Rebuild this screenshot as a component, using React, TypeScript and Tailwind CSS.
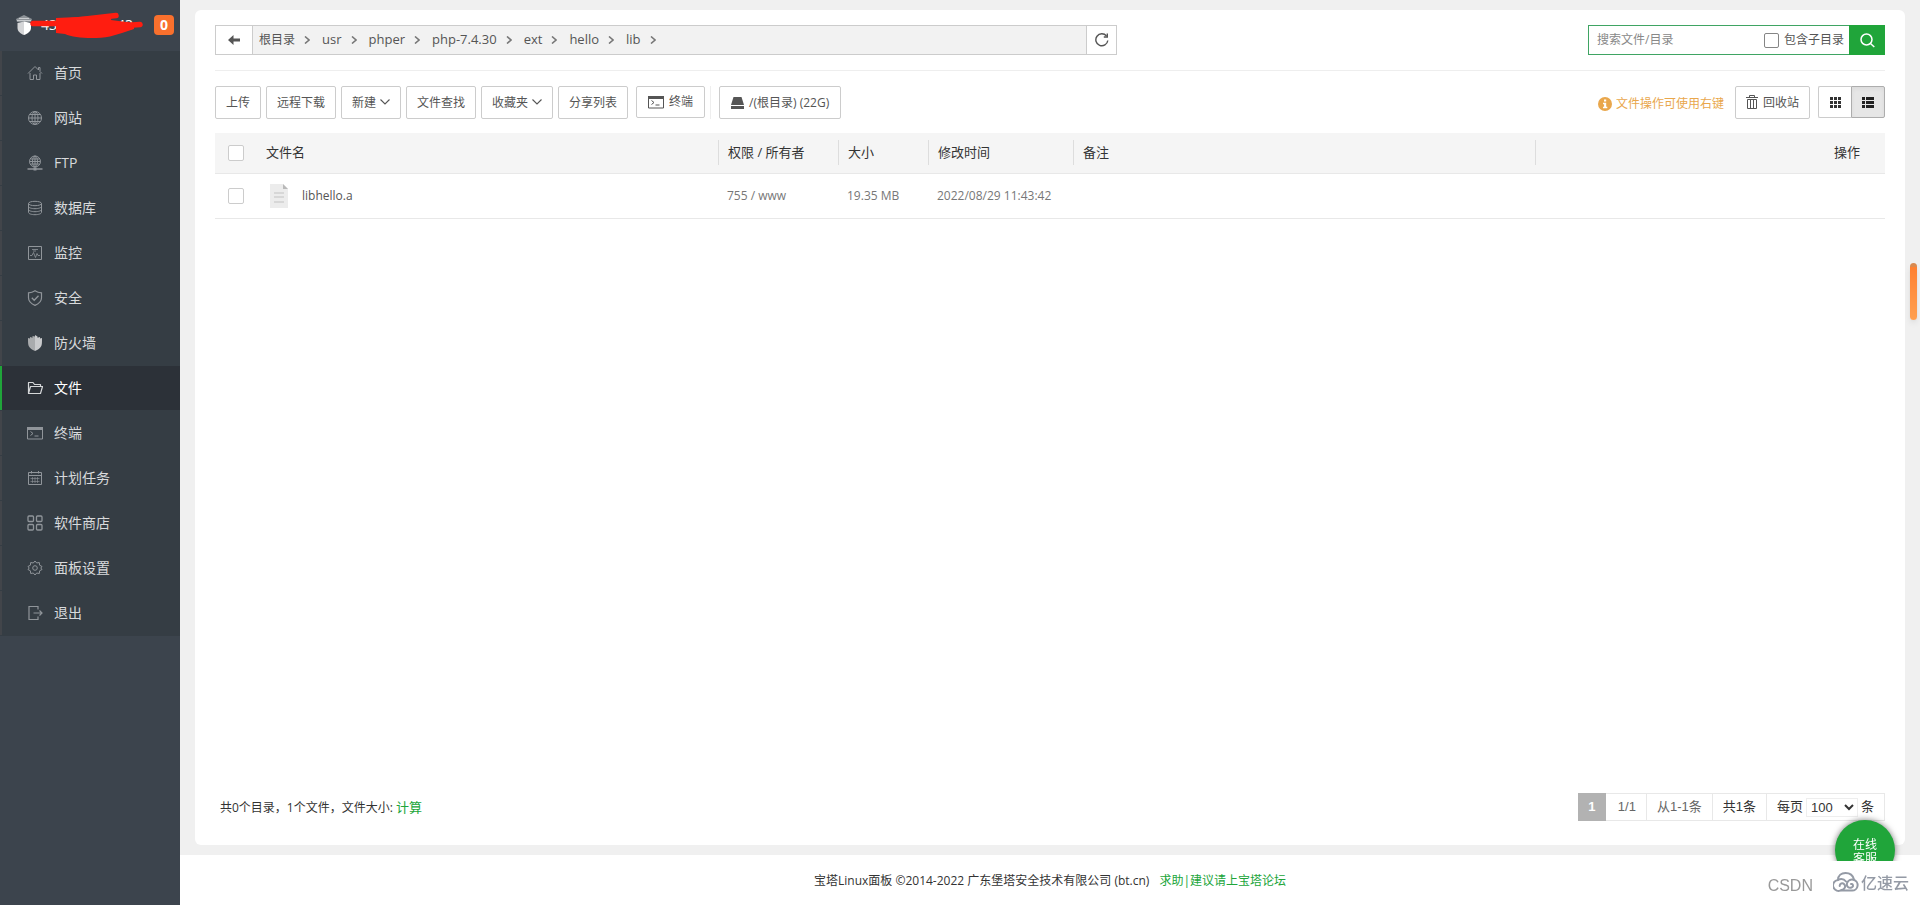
import type { ReactNode } from "react";
import clsx from "clsx";

interface MenuItem {
  label: string;
  icon: ReactNode;
  active?: boolean;
}

interface SvgIconProps {
  children: ReactNode;
  className?: string;
}

function LineIcon({ children, className = "size-4" }: SvgIconProps) {
  return (
    <svg viewBox="0 0 16 16" fill="none" stroke="currentColor" strokeWidth="1" className={className} aria-hidden="true">
      {children}
    </svg>
  );
}

function TerminalIcon({ className = "size-4" }: { className?: string }) {
  return (
    <LineIcon className={className}>
      <path d="M.5 2.500h15v11.500H.5z" />
      <path d="M0 2h16v3H0z" fill="currentColor" stroke="none" />
      <path d="M3.500 6.500l2.500 2-2.500 2M7.500 11h4" />
    </LineIcon>
  );
}

const menu: MenuItem[] = [
  {
    label: "首页",
    icon: (
      <LineIcon>
        <path d="M1 8.500 8 1.500l3.500 3.500V2.500h1.500V6.500l2 2M3 8v6.500h3.500V10h3v4.500H13V8" />
      </LineIcon>
    ),
  },
  {
    label: "网站",
    icon: (
      <LineIcon>
        <circle cx="8" cy="8" r="6.500" />
        <ellipse cx="8" cy="8" rx="3" ry="6.500" />
        <path d="M8 1.500v13M1.500 8h13M2.500 4.500h11M2.500 11.500h11" />
      </LineIcon>
    ),
  },
  {
    label: "FTP",
    icon: (
      <LineIcon>
        <circle cx="8" cy="6.500" r="5.500" />
        <ellipse cx="8" cy="6.500" rx="2.500" ry="5.500" />
        <path d="M8 1v11M2.500 6.500h11M3.500 4h9M3.500 9h9" />
        <path d="M.5 14h15" strokeWidth="1.500" />
        <path d="M6.500 14h3" strokeWidth="3" />
      </LineIcon>
    ),
  },
  {
    label: "数据库",
    icon: (
      <LineIcon>
        <ellipse cx="8" cy="3.500" rx="6.500" ry="2.200" />
        <path d="M1.500 3.500v9c0 1.200 3 2.200 6.500 2.200s6.500-1 6.500-2.200v-9M1.500 6.500c0 1.200 3 2.200 6.500 2.200s6.500-1 6.500-2.200M1.500 9.500c0 1.200 3 2.200 6.500 2.200s6.500-1 6.500-2.200" />
      </LineIcon>
    ),
  },
  {
    label: "监控",
    icon: (
      <LineIcon>
        <path d="M1.500 1.500h13v13h-13z" />
        <path d="M3 10.500h2l1.500-3 2 5 1.500-4 1 2h2M5 4.500h6M6 6h3" strokeWidth=".8" />
      </LineIcon>
    ),
  },
  {
    label: "安全",
    icon: (
      <LineIcon>
        <path d="M8 .8c2 1.400 4 2 6.500 2v5c0 3.500-2.500 6-6.500 7.600C4 13.800 1.500 11.300 1.500 7.800v-5c2.500 0 4.500-.6 6.500-2z" strokeWidth="1.200" />
        <path d="M4.800 7.800l2.400 2.400 4.300-4.500" strokeWidth="1.300" />
      </LineIcon>
    ),
  },
  {
    label: "防火墙",
    icon: (
      <svg viewBox="0 0 16 16" className="size-4" aria-hidden="true">
        <path d="M8 0v16c-3-1.300-5-2.800-6-4.500-1-1.500-1-4-1-8.500l2 .5V2l2.500.8V1L8 1.500z" fill="#a9abad" />
        <path d="M8 0l2.500 1.500v1.300L13 2v1.500l2-.5c0 4.500 0 7-1 8.500-1 1.700-3 3.200-6 4.500z" fill="#c9cacc" />
      </svg>
    ),
  },
  {
    label: "文件",
    active: true,
    icon: (
      <LineIcon>
        <path d="M1.500 13.500v-11h4.500l1.500 2h6v2M1.500 13.500l2-7h12l-2 7z" strokeWidth="1.200" strokeLinejoin="round" />
      </LineIcon>
    ),
  },
  { label: "终端", icon: <TerminalIcon /> },
  {
    label: "计划任务",
    icon: (
      <LineIcon>
        <path d="M1.500 2.500h13v12h-13zM1.500 5.500h13M4.500 1v2.500M11.500 1v2.500" />
        <path d="M3.500 8.500h9M3.500 11.500h9M5.500 7v6M8 7v6M10.500 7v6" strokeWidth=".6" />
      </LineIcon>
    ),
  },
  {
    label: "软件商店",
    icon: (
      <LineIcon>
        <rect x="1" y="1" width="5.500" height="5.500" rx="1" strokeWidth="1.300" />
        <rect x="9.500" y="1" width="5.500" height="5.500" rx="1" strokeWidth="1.300" />
        <rect x="1" y="9.500" width="5.500" height="5.500" rx="1" strokeWidth="1.300" />
        <rect x="9.500" y="9.500" width="5.500" height="5.500" rx="1" strokeWidth="1.300" />
      </LineIcon>
    ),
  },
  {
    label: "面板设置",
    icon: (
      <LineIcon>
        <path d="M8 1l1.700 2 2.600-.5.3 2.700 2.400 1.300L13.800 8l1.200 1.500-2.400 1.300-.3 2.700-2.600-.5L8 15l-1.700-2-2.600.5-.3-2.700L1 9.500 2.200 8 1 6.500l2.400-1.300.3-2.700 2.600.5z" />
        <circle cx="8" cy="8" r="2.300" />
      </LineIcon>
    ),
  },
  {
    label: "退出",
    icon: (
      <LineIcon>
        <path d="M11 4.500v-3H2v13h9v-3M6.500 8h8M12.500 5.500 15 8l-2.500 2.500" strokeWidth="1.200" />
      </LineIcon>
    ),
  },
];

const crumbs = ["根目录", "usr", "phper", "php-7.4.30", "ext", "hello", "lib"];

function Sidebar() {
  return (
    <aside className="w-[180px] shrink-0 bg-[#3c444d]">
      <div className="relative flex h-[51px] items-center pr-[6px] pl-[15px] pb-[1px]">
        <svg viewBox="0 0 18 20" className="h-5 w-[18px]" aria-hidden="true">
          <path d="M1 4l8-4 8 4-1 3H2z" fill="#8d9297" />
          <path d="M4 3.500h10M2 5.500h14" stroke="#c9cccf" strokeWidth="1" />
          <path d="M2.500 8 9 6.500V20c-4-1.500-6.500-4-6.500-7z" fill="#d5d6d8" />
          <path d="M9 6.500 16 8v5c0 3-3 5.500-7 7z" fill="#fff" />
        </svg>
        <span className="ml-2 text-sm text-white">43</span>
        <span className="ml-[60px] text-sm text-white">43</span>
        <svg viewBox="0 0 120 28" className="absolute top-3 left-[28px] h-7 w-[120px]" aria-hidden="true">
          <path d="M5 11.500h40M40 9 88 3.500M60 16l52-3.500" fill="none" stroke="#ff1d10" strokeWidth="5.500" strokeLinecap="round" />
          <path d="M28 6 60 4.500 84 3l-1 5 23 3v6c-8 3-16 5-24 7.500C66 27.500 46 26 37 22l-9-1z" fill="#ff1d10" />
        </svg>
        <span className="ml-auto flex size-5 items-center justify-center rounded bg-[#f9702d] text-sm font-bold text-white">0</span>
      </div>
      <nav className="flex flex-col bg-[#353d44]">
        {menu.map((item) => (
          <a
            key={item.label}
            href="#"
            className={clsx(
              "mb-px flex h-11 items-center gap-[11px] border-l-2 pl-[25px] text-sm",
              item.active ? "border-[#20a53a] bg-[#2c3138] text-white" : "border-[#42454a] text-[#d8dadc]"
            )}
          >
            <span className={item.active ? "text-[#d5d7d9]" : "text-[#90959a]"}>{item.icon}</span>
            {item.label}
          </a>
        ))}
      </nav>
    </aside>
  );
}

function PathBar() {
  return (
    <div className="flex h-[30px] w-[902px] border border-[#ccc] text-[#555]">
      <button type="button" aria-label="返回" className="flex w-[37px] items-center justify-center border-r border-[#ccc] bg-white">
        <svg viewBox="0 0 12 10" className="h-[10px] w-3" aria-hidden="true">
          <path d="M0 5l5.500-5v3.400H12v3.200H5.500V10z" fill="currentColor" />
        </svg>
      </button>
      <div className="flex flex-1 items-center bg-[#f2f2f2] pl-[6px]">
        {crumbs.map((name, i) => (
          <span key={name} className="flex items-center">
            <a href="#" className={i === 0 ? "text-xs" : "text-[13px]"}>
              {name}
            </a>
            <svg viewBox="0 0 6 8" className="mr-3 ml-[9px] h-2 w-[6px]" fill="none" stroke="#777" strokeWidth="1.600" aria-hidden="true">
              <path d="M1 .5 5 4 1 7.500" />
            </svg>
          </span>
        ))}
      </div>
      <button type="button" aria-label="刷新" className="flex w-[30px] items-center justify-center border-l border-[#ccc] bg-white">
        <svg viewBox="0 0 14 14" className="size-[14px]" fill="none" stroke="currentColor" strokeWidth="1.400" aria-hidden="true">
          <path d="M12.800 7.500A6 6 0 1 1 11.500 3" />
          <path d="M12.300.5v3.500H8.800" />
        </svg>
      </button>
    </div>
  );
}

function SearchBox() {
  return (
    <form className="flex h-[30px] w-[297px]">
      <div className="flex min-w-0 flex-1 items-center border border-r-0 border-[#3fa463] pr-[5px] pl-2 text-xs text-[#555]">
        <input type="text" aria-label="搜索" placeholder="搜索文件/目录" className="min-w-0 flex-1 outline-none placeholder:text-[#888]" />
        <label className="flex items-center gap-[5px]">
          <input type="checkbox" className="size-[15px] appearance-none rounded-xs border border-[#858585] bg-white" />
          包含子目录
        </label>
      </div>
      <button type="submit" aria-label="搜索" className="flex w-9 items-center justify-center bg-[#20a53a] text-white">
        <svg viewBox="0 0 15 15" className="size-[15px]" fill="none" stroke="currentColor" strokeWidth="1.500" aria-hidden="true">
          <circle cx="6.500" cy="6.500" r="5.500" />
          <path d="M10.500 10.500 14.300 14" />
        </svg>
      </button>
    </form>
  );
}

interface ToolButtonProps {
  children: ReactNode;
  dropdown?: boolean;
  className?: string;
}

function ToolButton({ children, dropdown, className = "h-[33px] px-[10px]" }: ToolButtonProps) {
  return (
    <button
      type="button"
      className={clsx("flex items-center rounded-xs border border-[#ccc] bg-white text-xs whitespace-nowrap text-[#555]", className)}
    >
      {children}
      {dropdown && (
        <svg viewBox="0 0 10 6" className="mb-[2px] ml-1 h-[6px] w-[10px]" fill="none" stroke="currentColor" strokeWidth="1.100" aria-hidden="true">
          <path d="M.5.5 5 5 9.500.5" />
        </svg>
      )}
    </button>
  );
}

function Toolbar() {
  return (
    <div className="flex items-start gap-[5px]">
      <ToolButton>上传</ToolButton>
      <ToolButton>远程下载</ToolButton>
      <ToolButton dropdown>新建</ToolButton>
      <ToolButton>文件查找</ToolButton>
      <ToolButton dropdown>收藏夹</ToolButton>
      <ToolButton>分享列表</ToolButton>
      <ToolButton className="ml-[3px] h-8 gap-[5px] px-[11px]">
        <TerminalIcon />
        终端
      </ToolButton>
      <span className="h-[33px] w-px bg-[#eee]" />
      <ToolButton className="ml-[3px] h-[33px] gap-[5px] px-[11px]">
        <svg viewBox="0 0 13 12" className="h-3 w-[13px]" fill="currentColor" aria-hidden="true">
          <path d="M2.500 0h8L13 8H0zM0 9h13v3H0z" />
        </svg>
        /(根目录) (22G)
      </ToolButton>

      <div className="ml-auto flex items-start">
        <span className="flex h-9 items-center gap-1 text-xs text-[#e9a74c]">
          <svg viewBox="0 0 14 14" className="size-[14px]" aria-hidden="true">
            <circle cx="7" cy="7" r="7" fill="currentColor" />
            <path d="M6 2.500h2.200v2H6zM5 5.800h3.200v4H9.300v1.500H5V9.800h1.100V7.300H5z" fill="#fff" />
          </svg>
          文件操作可使用右键
        </span>
        <ToolButton className="mr-2 ml-[11px] h-[33px] gap-[5px] px-[10px]">
          <svg viewBox="0 0 12 14" className="mb-[2px] h-[14px] w-3" fill="none" stroke="currentColor" aria-hidden="true">
            <path d="M0 2.500h12M3.500 2.500v-2h5v2M1.500 4.500v9h9v-9zM4.500 5v8M7.500 5v8" />
          </svg>
          回收站
        </ToolButton>
        <button
          type="button"
          aria-label="图标视图"
          className="flex h-8 w-[33px] items-center justify-center rounded-l-xs border border-r-0 border-[#ccc] text-[#333]"
        >
          <svg viewBox="0 0 11 11" className="size-[11px]" fill="currentColor" aria-hidden="true">
            <path d="M0 0h3v3H0zM4 0h3v3H4zM8 0h3v3H8zM0 4h3v3H0zM4 4h3v3H4zM8 4h3v3H8zM0 8h3v3H0zM4 8h3v3H4zM8 8h3v3H8z" />
          </svg>
        </button>
        <button
          type="button"
          aria-label="列表视图"
          className="flex h-8 w-[34px] items-center justify-center rounded-r-xs border border-[#adadad] bg-[#e6e6e6] text-[#222] inset-shadow-sm"
        >
          <svg viewBox="0 0 12 11" className="h-[11px] w-3" fill="currentColor" aria-hidden="true">
            <path d="M0 0h3v3H0zM4 0h8v3H4zM0 4h3v3H0zM4 4h8v3H4zM0 8h3v3H0zM4 8h8v3H4z" />
          </svg>
        </button>
      </div>
    </div>
  );
}

function RowCheckbox({ label }: { label: string }) {
  return (
    <input
      type="checkbox"
      aria-label={label}
      className="ml-[13px] block size-4 appearance-none rounded-xs border border-[#ccc] bg-white"
    />
  );
}

function HeadCell({ children }: { children?: ReactNode }) {
  return (
    <th className="p-0 font-normal">
      <div className="h-[25px] border-l border-[#ddd] pl-[9px] leading-[25px]">{children}</div>
    </th>
  );
}

function FileTable() {
  return (
    <table className="w-full table-fixed border-collapse text-left">
      <colgroup>
        <col className="w-[51px]" />
        <col className="w-[452px]" />
        <col className="w-[120px]" />
        <col className="w-[90px]" />
        <col className="w-[145px]" />
        <col />
        <col className="w-[350px]" />
      </colgroup>
      <thead>
        <tr className="h-[40px] border-b border-[#e8e8e8] bg-[#f5f5f5] text-[13px] text-[#333]">
          <th className="p-0">
            <RowCheckbox label="全选" />
          </th>
          <th className="p-0 font-normal">文件名</th>
          <HeadCell>权限 / 所有者</HeadCell>
          <HeadCell>大小</HeadCell>
          <HeadCell>修改时间</HeadCell>
          <HeadCell>备注</HeadCell>
          <th className="p-0 text-right font-normal">
            <div className="h-[25px] border-l border-[#ddd] pr-[25px] leading-[25px]">操作</div>
          </th>
        </tr>
      </thead>
      <tbody>
        <tr className="h-[45px] border-b border-[#e8e8e8] text-xs text-[#777]">
          <td className="p-0">
            <RowCheckbox label="libhello.a" />
          </td>
          <td className="p-0">
            <a href="#" className="flex items-center gap-[14px] pl-1 text-[#555]">
              <svg viewBox="0 0 18 24" className="h-6 w-[18px]" aria-hidden="true">
                <path d="M0 0h13l5 5v19H0z" fill="#ececec" />
                <path d="M13 0v5h5z" fill="#b9b9b9" />
                <path d="M4 9h10M4 13h10M4 18h10" stroke="#cfcfcf" strokeWidth="1.500" />
              </svg>
              libhello.a
            </a>
          </td>
          <td className="p-0 pl-[9px]">755 / www</td>
          <td className="p-0 pl-[9px]">19.35 MB</td>
          <td className="p-0 pl-[9px]">2022/08/29 11:43:42</td>
          <td className="p-0" />
          <td className="p-0" />
        </tr>
      </tbody>
    </table>
  );
}

function Pagination() {
  return (
    <div className="flex h-7 border border-[#e8e8e8] font-['Liberation_Sans','Noto_Sans_CJK_SC',sans-serif] text-[13px] text-[#333]">
      <span className="-my-px -ml-px flex w-7 items-center justify-center bg-[#b2b2b2] font-bold text-white">1</span>
      <span className="flex items-center border-r border-[#e8e8e8] pr-[10px] pl-3 text-[#666]">1/1</span>
      <span className="flex items-center border-r border-[#e8e8e8] px-[10px] text-[#666]">从1-1条</span>
      <span className="flex items-center border-r border-[#e8e8e8] px-[10px]">共1条</span>
      <label className="flex items-center gap-[3px] px-[10px]">
        每页
        <select defaultValue="100" className="h-[19px] w-[52px] rounded-none border border-[#eee] bg-white">
          <option>100</option>
          <option>200</option>
          <option>500</option>
        </select>
        条
      </label>
    </div>
  );
}

function Watermark() {
  return (
    <div className="pointer-events-none fixed right-[11px] bottom-[7px] flex items-center">
      <span className="mr-5 pt-2 font-['Liberation_Sans',sans-serif] text-base text-[#999]">CSDN</span>
      <svg viewBox="0 0 26 20" className="mr-[2px] h-5 w-[26px]" fill="none" stroke="#949aa5" strokeWidth="2" strokeLinecap="round" aria-hidden="true">
        <path d="M5 8C5 3.500 8.500 1 12.500 1c4.500 0 7.500 2.500 8.500 6.500" />
        <path d="M13 9.500C11 7 7.500 6.800 5 7.900A5.500 5.500 0 1 0 8.500 18C12 17.500 13 14 11.200 12.200 9.500 10.500 6.500 11.500 6.700 14" />
        <path d="M8 18.500h11a5.500 5.500 0 1 0-5-7.500c-1 3.500 2 5.500 4.500 4.500s1.500-4-.5-3.500" />
      </svg>
      <span className="font-['Noto_Sans_CJK_SC',sans-serif] text-base font-medium text-[#949aa5]">亿速云</span>
    </div>
  );
}

export default function App() {
  return (
    <div className="flex min-h-screen bg-[#f0f0f0] font-['Open_Sans','Noto_Sans_CJK_SC',sans-serif] text-[#333]">
      <Sidebar />
      <div className="flex min-w-0 flex-1 flex-col">
        <main className="mx-[15px] my-[10px] flex flex-1 flex-col rounded-md bg-white px-5 pt-[15px] pb-6">
          <div className="flex items-center justify-between border-b border-[#eee] pb-[15px]">
            <PathBar />
            <SearchBox />
          </div>
          <div className="pt-[15px] pb-[11px]">
            <Toolbar />
          </div>
          <FileTable />
          <div className="mt-auto flex items-center justify-between">
            <p className="pt-[2px] pl-[5px] text-xs">
              共0个目录，1个文件，文件大小:{" "}
              <a href="#" className="text-[13px] text-[#20a53a]">
                计算
              </a>
            </p>
            <Pagination />
          </div>
        </main>
        <footer className="flex h-[50px] items-center justify-center gap-[10px] bg-white pt-[2px] text-xs">
          <span>宝塔Linux面板 ©2014-2022 广东堡塔安全技术有限公司 (bt.cn)</span>
          <a href="#" className="text-[#20a53a]">
            求助|建议请上宝塔论坛
          </a>
        </footer>
      </div>

      <div className="fixed top-[263px] right-[3px] h-[57px] w-[7px] rounded-sm border-t-4 border-[#d98a50] bg-linear-to-b from-[#ff8030] to-[#ffa050] shadow-md" />
      {/* the bottom of the chat bubble is cut off where the footer starts */}
      <div className="fixed right-[15px] bottom-11 h-[51px] w-20 overflow-hidden px-[10px] pt-[10px]">
        <button
          type="button"
          className="size-[60px] rounded-full bg-[#20a53a] px-4 pt-1 text-xs leading-[14px] text-white shadow-[0_0_6px_#0008]"
        >
          在线客服
        </button>
      </div>
      <Watermark />
    </div>
  );
}
